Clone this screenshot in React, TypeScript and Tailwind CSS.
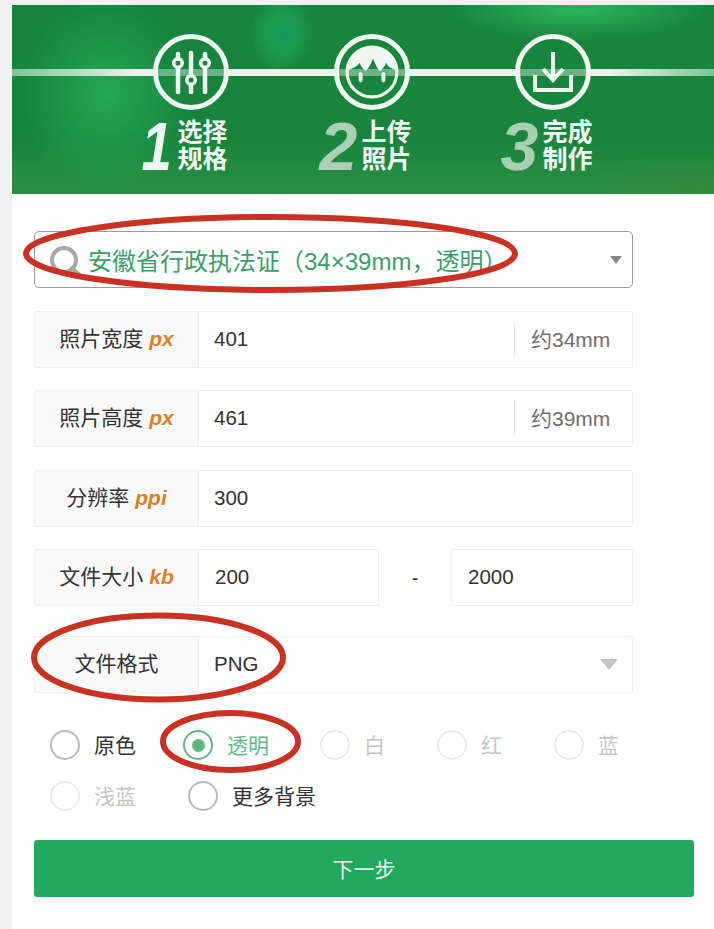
import React from 'react';

const cjk = `font-['Liberation_Sans','Noto_Sans_CJK_SC',sans-serif]`;

function SlidersIcon() {
  return (
    <svg width="44" height="44" viewBox="0 0 44 44" fill="none" stroke="#eef8f0" strokeWidth="4.500" strokeLinecap="round">
      <path d="M9 4v4.500M9 18v24" />
      <circle cx="9" cy="13" r="4.300" strokeWidth="3.500" />
      <path d="M22 3v22M22 35v7" />
      <circle cx="22" cy="30" r="4.300" strokeWidth="3.500" />
      <path d="M36 4v4.500M36 18v24" />
      <circle cx="36" cy="13" r="4.300" strokeWidth="3.500" />
    </svg>
  );
}

function FaceIcon() {
  return (
    <svg width="54" height="54" viewBox="0 0 52 52" fill="none">
      <circle cx="26" cy="26" r="24" stroke="#eef8f0" strokeWidth="3" />
      <path
        d="M3.500 24A22.500 22.500 0 0 1 48.500 24L44 22C42 21 41 20 39.500 17C38 21 36 24 33 25C31 22 29 18 27 13C25 18 23 22 20 25C17 23 15 20 14 17C12 20 10 21 8 22Z"
        fill="#eef8f0"
      />
      <ellipse cx="15" cy="31" rx="2" ry="5" fill="#eef8f0" />
      <ellipse cx="37" cy="31" rx="2" ry="5" fill="#eef8f0" />
    </svg>
  );
}

function DownloadIcon() {
  return (
    <svg width="42" height="42" viewBox="0 0 42 42" fill="none" stroke="#eef8f0" strokeWidth="4">
      <path d="M21 1v28" />
      <path d="M11 18l10 11 10-11" />
      <path d="M3 24v15h36V24" />
    </svg>
  );
}

function Step({ num, lines, active, icon }: { num: string; lines: string[]; active?: boolean; icon: React.ReactNode }) {
  return (
    <div className="w-[181px] flex flex-col items-center relative">
      <div className="w-[76px] h-[76px] rounded-full border-[5px] border-[#eef8f0] bg-[#18863f]/60 flex items-center justify-center">
        {icon}
      </div>
      <div className={`flex items-center mt-[9px] ${active ? 'ml-[-15px]' : 'ml-[-12px]'}`}>
        <span
          className={`font-['Liberation_Sans',sans-serif] italic font-bold text-[68px] leading-[54px] w-[36px] ${
            active ? 'text-[#eef8f0] scale-x-[0.8]' : 'text-[#a9d0b2]'
          }`}
        >
          {num}
        </span>
        <div
          className={`-mt-[4px] text-[25px] leading-[27px] font-bold text-[#eef8f0] font-['Noto_Sans_CJK_SC',sans-serif] ${
            active ? 'ml-[3px]' : 'ml-[6px]'
          }`}
        >
          {lines.map((l) => (
            <div key={l}>{l}</div>
          ))}
        </div>
      </div>
    </div>
  );
}

function Row({ label, unit, value, suffix }: { label: string; unit?: string; value: string; suffix?: string }) {
  return (
    <div className={`flex h-[57px] w-[599px] border border-[#eeeeee] rounded-[2px] items-stretch ${cjk}`}>
      <LabelCell label={label} unit={unit} />
      <div className="flex-1 flex items-center pl-[15px] text-[20.500px] text-[#333333]">{value}</div>
      {suffix && (
        <div className="flex items-center my-[10px] w-[118px] pl-[16px] border-l border-[#e4e4e4] text-[21px] text-[#6e6e6e]">
          {suffix}
        </div>
      )}
    </div>
  );
}

function LabelCell({ label, unit }: { label: string; unit?: string }) {
  return (
    <div className="w-[164px] shrink-0 bg-[#f9f9f9] border-r border-[#eeeeee] flex items-center justify-center pb-[2px] text-[21px] text-[#333333]">
      {label}
      {unit && <span className="ml-[6px] italic font-bold text-[#e07d24]">{unit}</span>}
    </div>
  );
}

function Radio({ label, width, state }: { label: string; width: string; state: 'normal' | 'checked' | 'disabled' }) {
  const ring =
    state === 'checked' ? 'border-[#5fb981]' : state === 'disabled' ? 'border-[#ececec]' : 'border-[#bbbbbb]';
  const text =
    state === 'checked' ? 'text-[#63bb84]' : state === 'disabled' ? 'text-[#c4c4c4]' : 'text-[#333333]';
  return (
    <div className={`flex items-center h-[30px] ${width}`}>
      <span className={`w-[30px] h-[30px] rounded-full border-[2.500px] ${ring} flex items-center justify-center shrink-0`}>
        {state === 'checked' && <span className="w-[13px] h-[13px] rounded-full bg-[#5cb87e]" />}
      </span>
      <span className={`ml-[14px] pt-[1px] text-[21px] ${text}`}>{label}</span>
    </div>
  );
}

export default function App() {
  return (
    <div className={`relative flex w-[714px] h-[929px] bg-white overflow-hidden ${cjk}`}>
      <div className="w-[12px] shrink-0 bg-[#f1f1f1]" />
      <div className="flex-1 min-w-0">
        <div className="h-[5px] bg-[#f1f1f1]" />
        <div className="relative h-[189px] overflow-hidden bg-[#18843c] bg-[radial-gradient(ellipse_85px_100px_at_95px_90px,#23a855_0%,transparent_100%),radial-gradient(ellipse_32px_40px_at_270px_28px,#169a5c_0%,#1c9c4e_50%,transparent_100%),radial-gradient(ellipse_130px_30px_at_566px_5px,#2cb560_0%,transparent_100%),radial-gradient(ellipse_140px_40px_at_690px_189px,#338a3a_0%,transparent_100%),linear-gradient(180deg,transparent_70%,#2b8f46_100%)]">
          <div className="absolute left-0 right-0 top-[64px] h-[7px] bg-[linear-gradient(90deg,#7cc493_0%,#e8f6ec_18%,#e8f6ec_85%,#7cc493_100%)]" />
          <div className="relative flex pt-[29px] pl-[88px]">
            <Step num="1" lines={['选择', '规格']} active icon={<SlidersIcon />} />
            <Step num="2" lines={['上传', '照片']} icon={<FaceIcon />} />
            <Step num="3" lines={['完成', '制作']} icon={<DownloadIcon />} />
          </div>
        </div>

        <div className="pl-[22px] pt-[37px]">
          <div className="flex items-center justify-between h-[57px] w-[599px] border border-[#999999] rounded-[5px] pl-[53px] pr-[10px]">
            <span className="mt-[5px] text-[24px] text-[#3a9f68] whitespace-nowrap">安徽省行政执法证（34×39mm，透明）</span>
            <span className="w-0 h-0 border-x-[6px] border-x-transparent border-t-[8px] border-t-[#888888]" />
          </div>

          <div className="mt-[23px]">
            <Row label="照片宽度" unit="px" value="401" suffix="约34mm" />
          </div>
          <div className="mt-[22px]">
            <Row label="照片高度" unit="px" value="461" suffix="约39mm" />
          </div>
          <div className="mt-[23px]">
            <Row label="分辨率" unit="ppi" value="300" />
          </div>

          <div className="mt-[22px] flex items-center w-[599px]">
            <div className="flex h-[57px] w-[345px] border border-[#eeeeee] rounded-[2px]">
              <LabelCell label="文件大小" unit="kb" />
              <div className="flex items-center pl-[16px] text-[20.500px] text-[#333333]">200</div>
            </div>
            <div className="w-[72px] text-center text-[20px] text-[#333333]">-</div>
            <div className="flex items-center h-[57px] w-[182px] border border-[#eeeeee] rounded-[2px] pl-[16px] text-[20.500px] text-[#333333]">
              2000
            </div>
          </div>

          <div className="mt-[30px] flex h-[57px] w-[599px] border border-[#eeeeee] rounded-[2px]">
            <LabelCell label="文件格式" />
            <div className="flex-1 flex items-center justify-between pl-[15px] pr-[14px] text-[20.500px] text-[#333333]">
              PNG
              <span className="w-0 h-0 border-x-[9px] border-x-transparent border-t-[11px] border-t-[#c4c4c4]" />
            </div>
          </div>

          <div className="mt-[37px] pl-[16px] flex">
            <Radio label="原色" width="w-[133px]" state="normal" />
            <Radio label="透明" width="w-[137px]" state="checked" />
            <Radio label="白" width="w-[117px]" state="disabled" />
            <Radio label="红" width="w-[117px]" state="disabled" />
            <Radio label="蓝" width="w-[100px]" state="disabled" />
          </div>
          <div className="mt-[21px] pl-[16px] flex">
            <Radio label="浅蓝" width="w-[138px]" state="disabled" />
            <Radio label="更多背景" width="w-[160px]" state="normal" />
          </div>

          <button className="mt-[29px] pt-[3px] block w-[660px] h-[57px] rounded-[3px] bg-[#23a85f] text-[21px] text-[#e8f8ee]">
            下一步
          </button>
        </div>
      </div>

      {/* search glass and red marker circles drawn over the form */}
      <svg className="absolute left-0 top-0 pointer-events-none" width="714" height="929" fill="none">
        <circle cx="64" cy="260" r="12" stroke="#a8a8a8" strokeWidth="4" />
        <path d="M72 269l7 6" stroke="#a8a8a8" strokeWidth="5" strokeLinecap="round" />
        <ellipse cx="270.500" cy="253.500" rx="244.500" ry="36.500" stroke="#c93222" strokeWidth="6" />
        <ellipse cx="158.500" cy="657.500" rx="124.500" ry="42" stroke="#c93222" strokeWidth="6" />
        <ellipse cx="230.500" cy="741.500" rx="67.500" ry="28.500" stroke="#c93222" strokeWidth="6" />
      </svg>
    </div>
  );
}
